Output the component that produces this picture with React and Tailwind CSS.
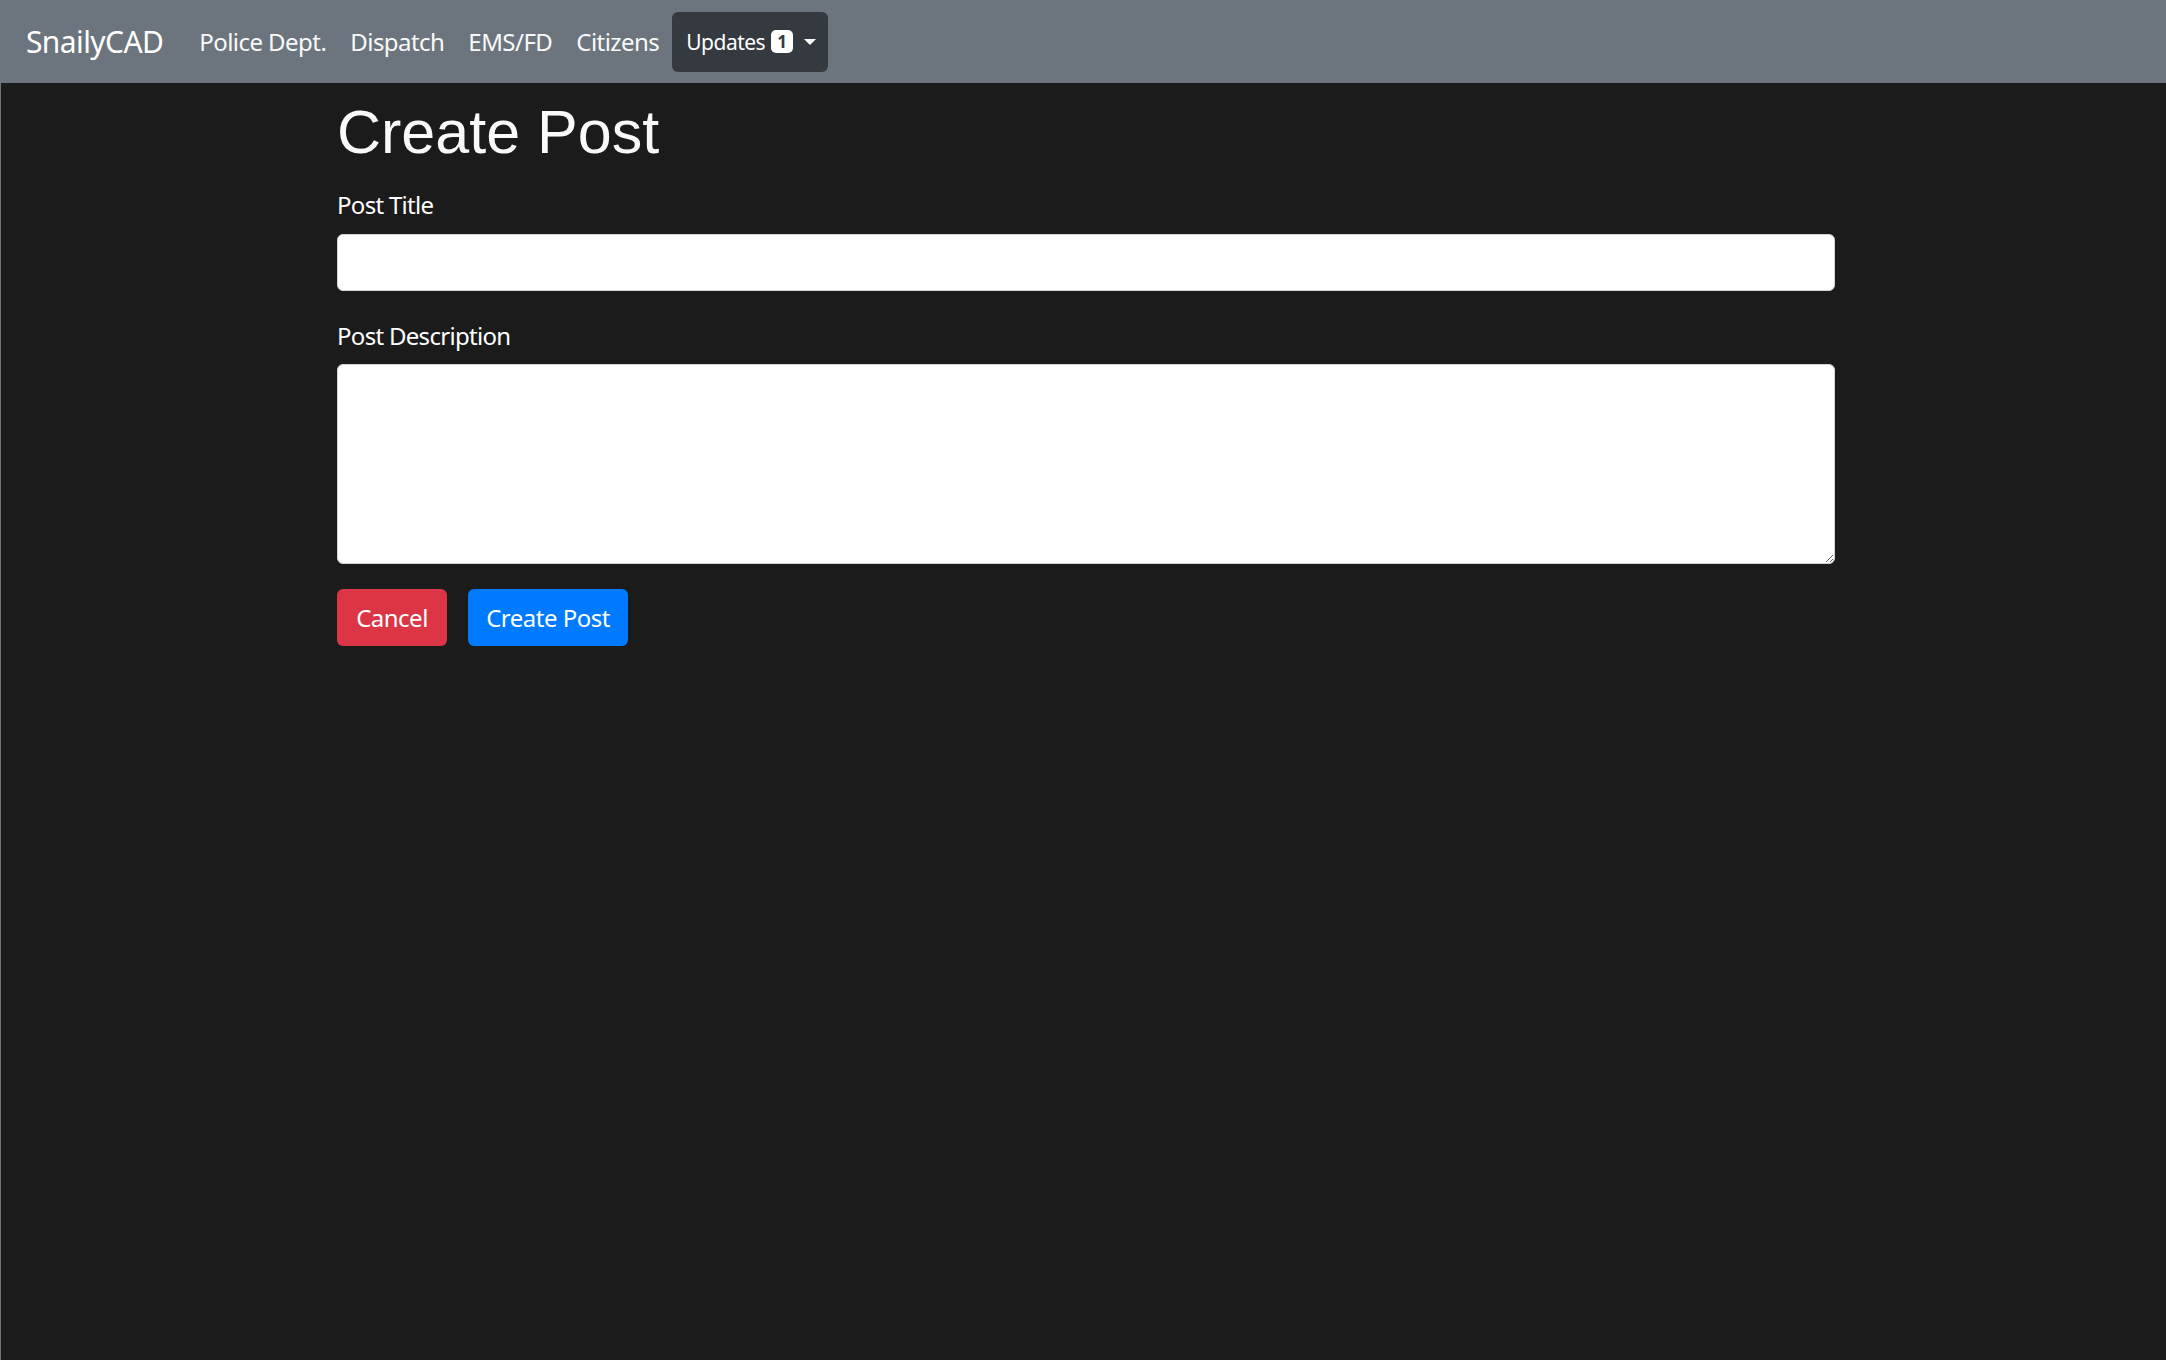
import React from "react";

export default function App() {
  return (
    <div className="min-h-[1360px] bg-[#1b1b1b] border-l border-[#6c757d] font-['Noto_Sans',sans-serif] text-white">
      <nav className="h-[83px] bg-[#6c757d] flex items-center pl-[25px]">
        <a className="text-[30px] leading-[45px] text-white mr-[24px] tracking-[-0.6px]">SnailyCAD</a>
        <div className="flex items-center text-[24px] leading-[36px] tracking-[-0.55px]">
          <a className="px-[12px] text-[#f8f9fa]">Police Dept.</a>
          <a className="px-[12px] text-[#f8f9fa]">Dispatch</a>
          <a className="px-[12px] text-[#f8f9fa]">EMS/FD</a>
          <a className="px-[12px] text-[#f8f9fa]">Citizens</a>
          <button className="ml-[1px] h-[60px] w-[156px] bg-[#343a40] rounded-[6px] flex items-center pl-[14px] text-white text-[21px] tracking-[-0.5px]">
            <span>Updates</span>
            <span className="ml-[6px] w-[22px] h-[23px] bg-white text-[#343a40] rounded-[5px] text-[17px] font-bold leading-[23px] text-center tracking-normal">1</span>
            <span className="ml-[11px] w-0 h-0 border-t-[6px] border-t-white border-x-[6.5px] border-x-transparent"></span>
          </button>
        </div>
      </nav>
      <main className="ml-[336px] w-[1498px] pt-[13px]">
        <h1 className="font-['Liberation_Sans',Arial,sans-serif] text-[61px] leading-[72px] text-[#f8f9fa] mb-[19px]">Create Post</h1>
        <label className="block text-[24px] leading-[36px] mb-[11px] tracking-[-0.7px]">Post Title</label>
        <input className="block w-full h-[57px] bg-white border border-[#ced4da] rounded-[6px] outline-none" />
        <label className="block text-[24px] leading-[36px] mt-[27px] mb-[10px] tracking-[-0.7px]">Post Description</label>
        <textarea className="block w-full h-[200px] bg-white border border-[#ced4da] rounded-[6px] outline-none resize-y"></textarea>
        <div className="flex mt-[25px] gap-[21px]">
          <button className="w-[110px] h-[57px] bg-[#dc3545] rounded-[6px] text-[24px] text-white tracking-[-0.5px]">Cancel</button>
          <button className="w-[160px] h-[57px] bg-[#007bff] rounded-[6px] text-[24px] text-white tracking-[-0.5px]">Create Post</button>
        </div>
      </main>
    </div>
  );
}
